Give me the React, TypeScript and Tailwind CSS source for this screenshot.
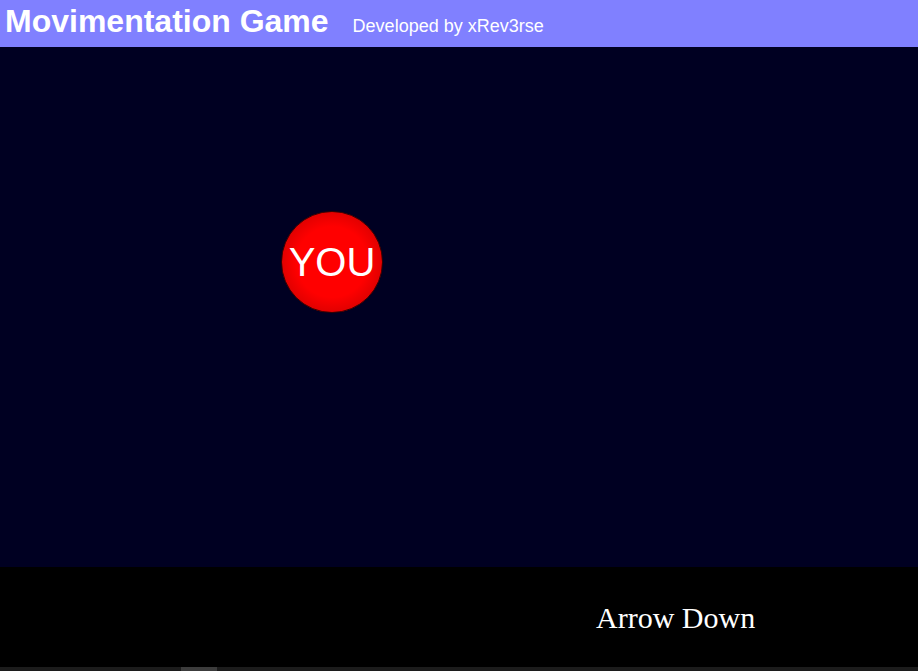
export default function App() {
  return (
    <div className="flex h-[671px] w-[918px] flex-col overflow-hidden bg-black font-['Liberation_Sans',Arial,sans-serif]">
      <header className="flex h-[47px] shrink-0 items-baseline bg-[#8080ff] px-[5px] pt-[1px] text-white">
        <h1 className="text-[32px] font-bold leading-[40px]">Movimentation Game</h1>
        <span className="ml-[24px] text-[18px]">Developed by xRev3rse</span>
      </header>

      <main className="relative h-[520px] shrink-0 bg-[#000022]">
        <div className="absolute left-[281px] top-[164px] flex h-[102px] w-[102px] items-center justify-center rounded-full border border-[#3a0000] bg-[radial-gradient(circle_at_center,#ff0000_50%,#b80000_100%)]">
          <span className="text-[40px] leading-none text-white">YOU</span>
        </div>
      </main>

      <footer className="flex h-[100px] shrink-0 items-center bg-black pl-[596px]">
        <span className="font-['Liberation_Serif','Times_New_Roman',serif] text-[30px] text-white">Arrow Down</span>
      </footer>

      <div className="flex h-[4px] shrink-0 bg-[#1c1c1c]">
        <div className="ml-[181px] w-[36px] bg-[#3c3c3c]" />
      </div>
    </div>
  );
}
